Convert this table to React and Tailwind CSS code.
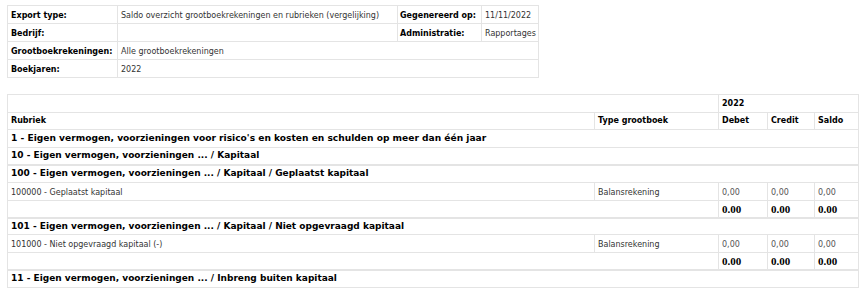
import React from 'react';

const line = 'border-[#e4e4e4]';

const metaRows = [
  { label: 'Export type:', value: 'Saldo overzicht grootboekrekeningen en rubrieken (vergelijking)', label2: 'Gegenereerd op:', value2: '11/11/2022' },
  { label: 'Bedrijf:', value: '', label2: 'Administratie:', value2: 'Rapportages' },
  { label: 'Grootboekrekeningen:', value: 'Alle grootboekrekeningen', span: true },
  { label: 'Boekjaren:', value: '2022', span: true },
];

const MetaTable = () => (
  <table className={`table-fixed border-collapse w-[531px] border ${line}`}>
    <colgroup>
      <col className="w-[110px]" />
      <col className="w-[280px]" />
      <col className="w-[84px]" />
      <col className="w-[57px]" />
    </colgroup>
    <tbody>
      {metaRows.map((r) => (
        <tr key={r.label} className="h-[18px]">
          <td className={`border ${line} px-[3px] pt-[3px] font-bold text-black whitespace-nowrap`}>{r.label}</td>
          {r.span ? (
            <td colSpan={3} className={`border ${line} px-[3px] pt-[3px] text-[#333]`}>{r.value}</td>
          ) : (
            <>
              <td className={`border ${line} px-[3px] pt-[3px] text-[#333] whitespace-nowrap`}>{r.value}</td>
              <td className={`border ${line} px-[2px] pt-[3px] font-bold text-black whitespace-nowrap`}>{r.label2}</td>
              <td className={`border ${line} px-[3px] pt-[3px] text-[#333] whitespace-nowrap`}>{r.value2}</td>
            </>
          )}
        </tr>
      ))}
    </tbody>
  </table>
);

const GroupRow = ({ text, size = 'text-[9px]', h, thick }) => (
  <tr className={`${h} ${thick ? `border-b-2 ${line}` : `border-b ${line}`}`}>
    <td colSpan={5} className={`px-[3px] font-bold text-black whitespace-nowrap ${size}`}>{text}</td>
  </tr>
);

const AccountRows = ({ name }) => (
  <>
    <tr className={`h-[18px] border-b ${line}`}>
      <td className="px-[3px] pt-[2px] text-[#333] whitespace-nowrap">{name}</td>
      <td className={`border-l ${line} px-[3px] pt-[2px] text-[#333]`}>Balansrekening</td>
      <td className={`border-l ${line} px-[3px] pt-[2px] text-[#555]`}>0,00</td>
      <td className={`border-l ${line} px-[3px] pt-[2px] text-[#555]`}>0,00</td>
      <td className={`border-l ${line} px-[3px] pt-[2px] text-[#555]`}>0,00</td>
    </tr>
    <tr className={`h-[17px] border-b-2 ${line}`}>
      <td colSpan={2}></td>
      {[0, 1, 2].map((i) => (
        <td key={i} className={`border-l ${line} px-[3px] pt-[2px] font-bold text-black text-[11px] font-['Liberation_Serif',serif]`}>0.00</td>
      ))}
    </tr>
  </>
);

const ReportTable = () => (
  <table className={`table-fixed border-collapse w-[851px] border ${line}`}>
    <colgroup>
      <col className="w-[587px]" />
      <col className="w-[124px]" />
      <col className="w-[49px]" />
      <col className="w-[47px]" />
      <col className="w-[44px]" />
    </colgroup>
    <tbody>
      <tr className={`h-[18px] border-b ${line}`}>
        <td colSpan={2}></td>
        <td colSpan={3} className={`border-l ${line} px-[3px] font-bold text-black`}>2022</td>
      </tr>
      <tr className={`h-[17px] border-b ${line}`}>
        <td className="px-[3px] font-bold text-black">Rubriek</td>
        <td className={`border-l ${line} px-[3px] font-bold text-black`}>Type grootboek</td>
        <td className={`border-l ${line} px-[3px] font-bold text-black`}>Debet</td>
        <td className={`border-l ${line} px-[3px] font-bold text-black`}>Credit</td>
        <td className={`border-l ${line} px-[3px] font-bold text-black`}>Saldo</td>
      </tr>
      <GroupRow h="h-[18px]" size="text-[9.1px]" text="1 - Eigen vermogen, voorzieningen voor risico's en kosten en schulden op meer dan één jaar" />
      <GroupRow h="h-[17px]" thick text="10 - Eigen vermogen, voorzieningen ... / Kapitaal" />
      <GroupRow h="h-[18px]" text="100 - Eigen vermogen, voorzieningen ... / Kapitaal / Geplaatst kapitaal" />
      <AccountRows name="100000 - Geplaatst kapitaal" />
      <GroupRow h="h-[17px]" text="101 - Eigen vermogen, voorzieningen ... / Kapitaal / Niet opgevraagd kapitaal" />
      <AccountRows name="101000 - Niet opgevraagd kapitaal (-)" />
      <GroupRow h="h-[18px]" text="11 - Eigen vermogen, voorzieningen ... / Inbreng buiten kapitaal" />
    </tbody>
  </table>
);

export default function App() {
  return (
    <div className="w-[865px] h-[291px] bg-white pl-[7px] pt-[5px] font-['DejaVu_Sans',Verdana,sans-serif] text-[8px] leading-none overflow-hidden">
      <MetaTable />
      <div className="h-[16px]" />
      <ReportTable />
    </div>
  );
}
